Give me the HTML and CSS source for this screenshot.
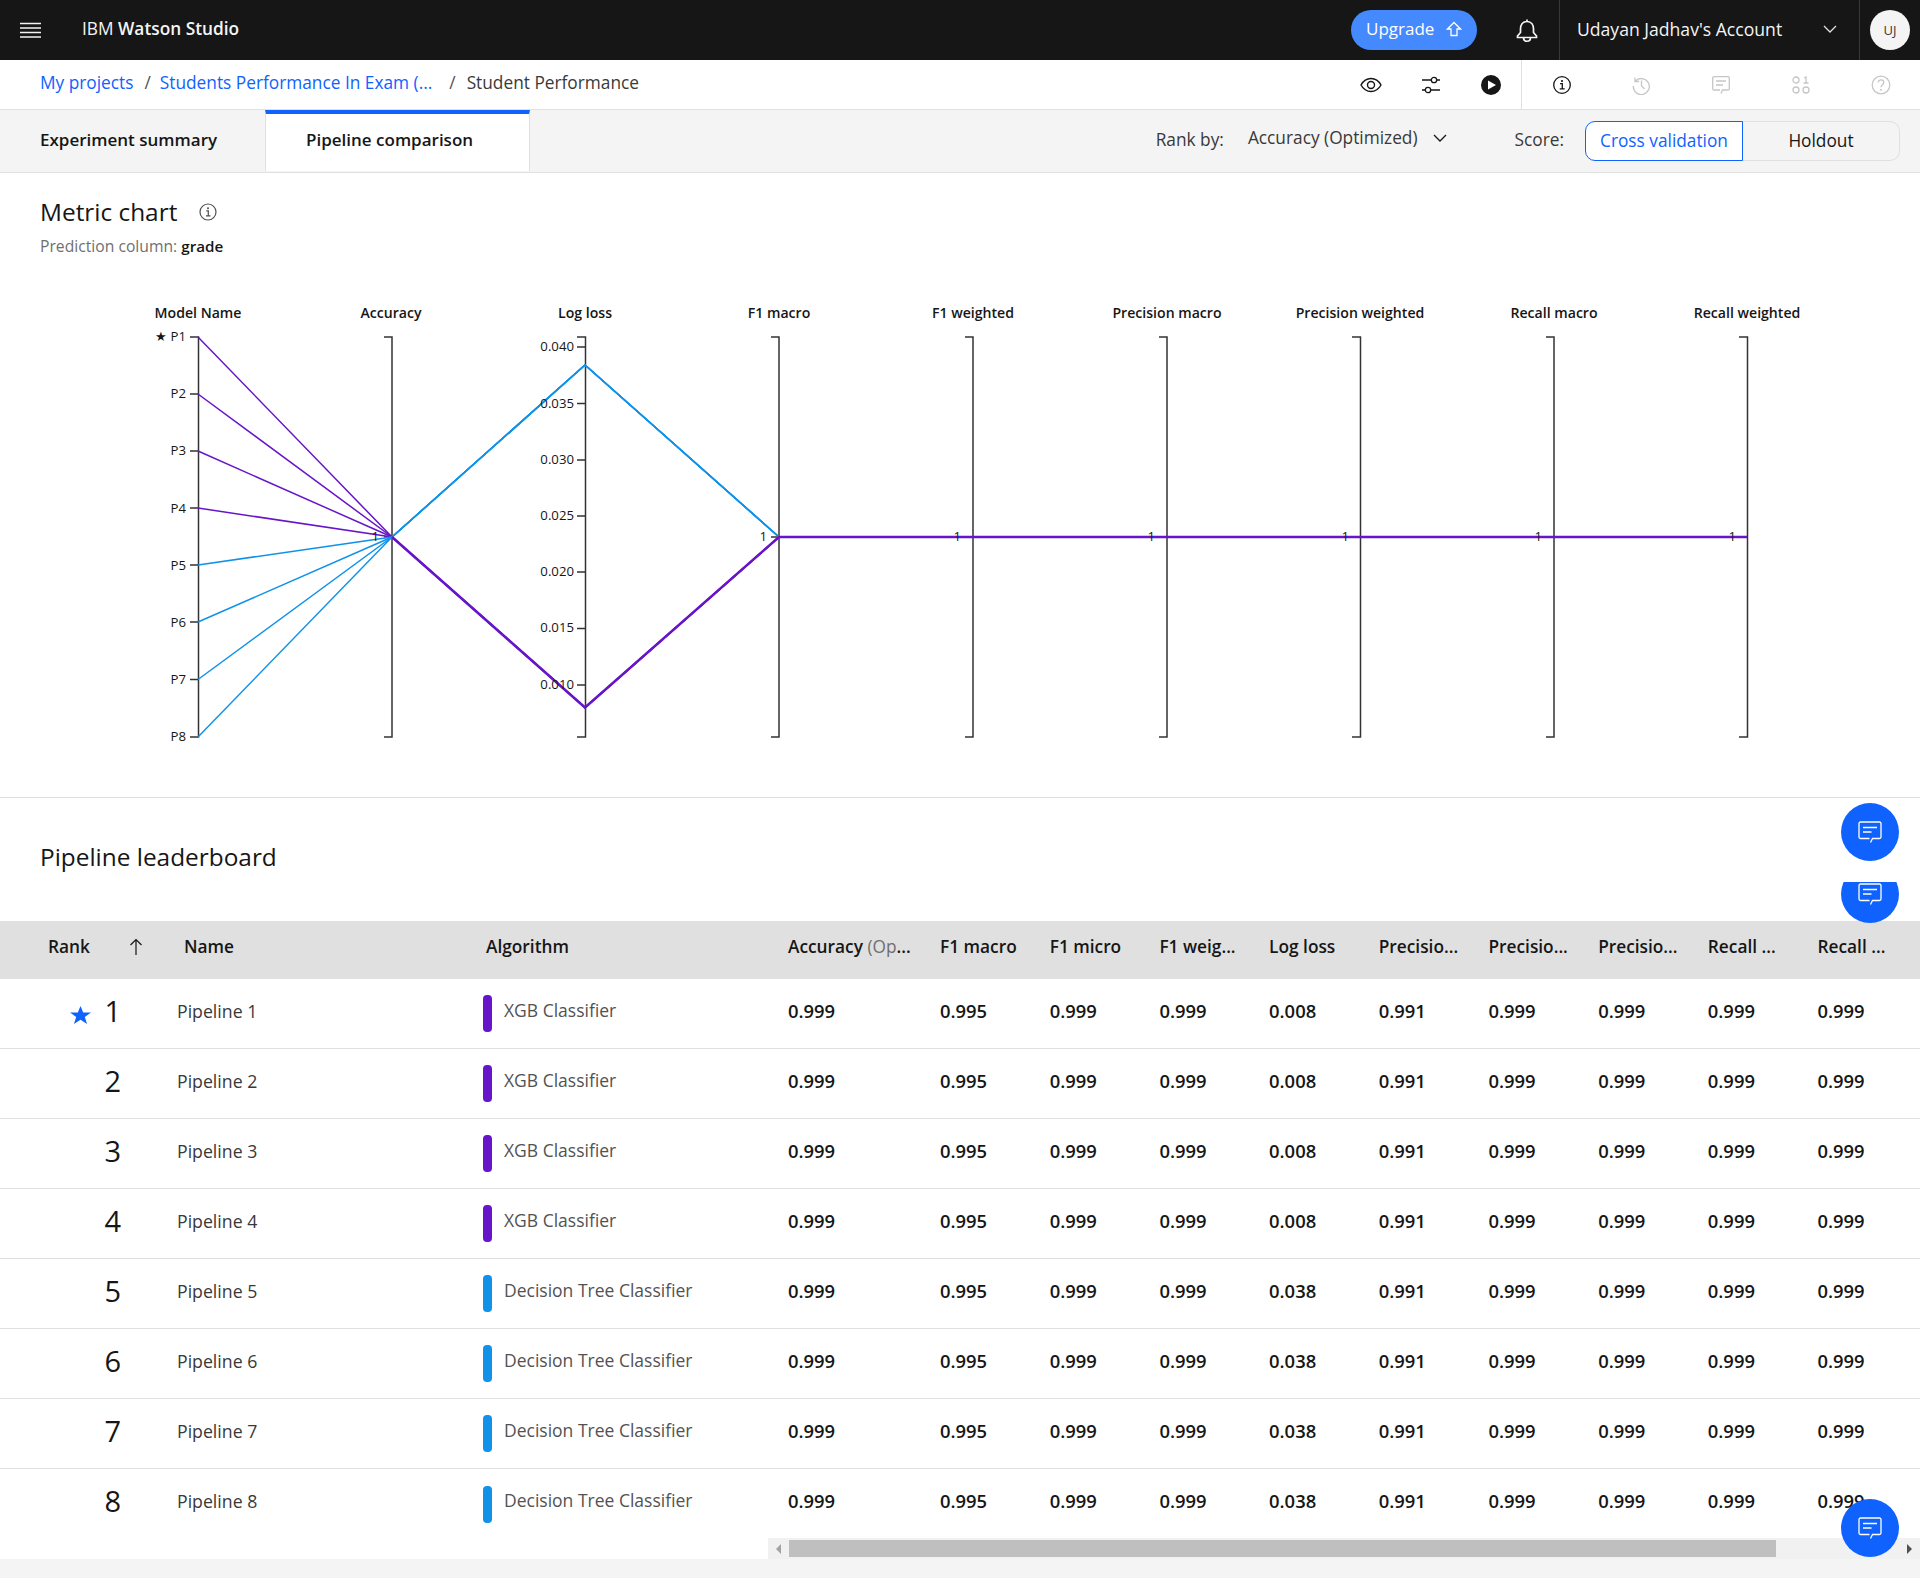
FILE: index.html
```html
<!DOCTYPE html>
<html lang="en">
<head>
  <meta charset="UTF-8" />
  <title>Student Performance - IBM Watson Studio</title>
  <link rel="stylesheet" href="styles.css">
</head>
<body>
  <div class="page">
    <header class="top-bar">
      <svg class="menu-icon" width="21" height="16" viewBox="0 0 21 16"><path d="M0 1.5h21M0 6h21M0 10.500h21M0 15h21" stroke="#f4f4f4" stroke-width="1.5" fill="none"/></svg>
      <div class="brand">IBM <b>Watson Studio</b></div>
      <button class="upgrade">Upgrade
        <svg width="16" height="16" viewBox="0 0 16 16"><path d="M8 1.500L14.500 8H11v6.500H5V8H1.500z" fill="none" stroke="#fff" stroke-width="1.300"/></svg>
      </button>
      <svg class="bell" width="24" height="26" viewBox="0 0 24 26"><path d="M12 2.500V4.500M12 4.500c-4.500 0-6.500 3.500-6.500 7.500v3.500L2.500 19v1.500h19V19l-3-3.500V12c0-4-2-7.500-6.500-7.500zM8.500 20.500c0 5 7 5 7 0" fill="none" stroke="#f4f4f4" stroke-width="1.700"/></svg>
      <div class="account">
        <span>Udayan Jadhav's Account</span>
        <svg width="14" height="8" viewBox="0 0 14 8"><path d="M1 1l6 6 6-6" fill="none" stroke="#e0e0e0" stroke-width="1.300"/></svg>
      </div>
      <div class="avatar">UJ</div>
    </header>

    <nav class="crumb-bar">
      <a class="crumb-link">My projects</a>
      <span class="crumb-sep">/</span>
      <a class="crumb-link">Students Performance In Exam (...</a>
      <span class="crumb-sep crumb-sep-wide">/</span>
      <span class="crumb-current">Student Performance</span>
      <div class="tools">
        <span class="tool">
          <svg width="22" height="16" viewBox="0 0 22 16"><path d="M1 8c2.500-4.500 6-6.500 10-6.500S18.500 3.500 21 8c-2.500 4.500-6 6.500-10 6.500S3.500 12.500 1 8z" fill="none" stroke="#161616" stroke-width="1.400"/><circle cx="11" cy="8" r="3.500" fill="none" stroke="#161616" stroke-width="1.400"/></svg>
        </span>
        <span class="tool">
          <svg width="20" height="18" viewBox="0 0 20 18"><g fill="none" stroke="#161616" stroke-width="1.300"><path d="M1 4h9M16 4h3M1 14h3M10 14h9"/><circle cx="13" cy="4" r="2.700"/><circle cx="7" cy="14" r="2.700"/></g></svg>
        </span>
        <span class="tool">
          <svg width="20" height="20" viewBox="0 0 20 20"><circle cx="10" cy="10" r="10" fill="#161616"/><path d="M7 5.500L15 10l-8 4.500z" fill="#fff"/></svg>
        </span>
        <span class="tool tool-wide tool-first">
          <svg width="20" height="20" viewBox="0 0 20 20"><circle cx="10" cy="10" r="8.300" fill="none" stroke="#161616" stroke-width="1.300"/><path d="M8 8.700h2.300v5M7.700 13.800h5" fill="none" stroke="#161616" stroke-width="1.300"/><circle cx="10" cy="6" r="1.100" fill="#161616"/></svg>
        </span>
        <span class="tool tool-wide">
          <svg width="20" height="20" viewBox="0 0 20 20"><g fill="none" stroke="#c6c6c6" stroke-width="1.300"><path d="M4 2.500v4h4M4.300 6.200A8 8 0 1 1 2.300 11"/><path d="M10.500 5.500V11l3 3"/></g></svg>
        </span>
        <span class="tool tool-wide">
          <svg width="18" height="20" viewBox="0 0 18 20"><g fill="none" stroke="#c6c6c6" stroke-width="1.300"><path d="M9 18.500l1.500-3.500H16a1.300 1.300 0 0 0 1.300-1.300V3A1.300 1.300 0 0 0 16 1.700H2A1.300 1.300 0 0 0 .700 3v10.700A1.300 1.300 0 0 0 2 15h6"/><path d="M4 6h10M4 10h7"/></g></svg>
        </span>
        <span class="tool tool-wide">
          <svg width="18" height="18" viewBox="0 0 18 18"><g fill="none" stroke="#c6c6c6" stroke-width="1.300"><circle cx="4" cy="4" r="3"/><circle cx="4" cy="14" r="3"/><circle cx="14" cy="14" r="3"/><path d="M12 2l2-1v6M11.500 7h5"/></g></svg>
        </span>
        <span class="tool tool-wide">
          <svg width="20" height="20" viewBox="0 0 20 20"><g fill="none" stroke="#c6c6c6" stroke-width="1.300"><circle cx="10" cy="10" r="8.800"/><path d="M7.300 7.500c0-3.500 5.500-3.500 5.500 0 0 2.300-2.800 2.300-2.800 4.700"/></g><circle cx="10" cy="14.800" r="1" fill="#c6c6c6"/></svg>
        </span>
      </div>
    </nav>

    <div class="tab-bar">
      <div class="tab">Experiment summary</div>
      <div class="tab tab-active">Pipeline comparison</div>
      <span class="rank-label">Rank by:</span>
      <span class="rank-select">Accuracy (Optimized)
        <svg width="14" height="8" viewBox="0 0 14 8"><path d="M1 1l6 6 6-6" fill="none" stroke="#161616" stroke-width="1.300"/></svg>
      </span>
      <span class="score-label">Score:</span>
      <div class="score-toggle">
        <span class="score-btn score-on">Cross validation</span>
        <span class="score-btn score-off">Holdout</span>
      </div>
    </div>

    <section class="metric">
      <h2 class="section-title">Metric chart
        <svg class="title-info" width="18" height="18" viewBox="0 0 18 18"><circle cx="9" cy="9" r="8" fill="none" stroke="#525252" stroke-width="1.200"/><path d="M7.300 7.800h2v5M7 12.900h4.500" fill="none" stroke="#525252" stroke-width="1.200"/><circle cx="9" cy="5.300" r="1" fill="#525252"/></svg>
      </h2>
      <p class="prediction">Prediction column: <b>grade</b></p>

      <svg class="chart" width="1920" height="507" viewBox="0 290 1920 507">
        <g class="heads">
          <text x="198" y="318">Model Name</text>
          <text x="391" y="318">Accuracy</text>
          <text x="585" y="318">Log loss</text>
          <text x="779" y="318">F1 macro</text>
          <text x="973" y="318">F1 weighted</text>
          <text x="1167" y="318">Precision macro</text>
          <text x="1360" y="318">Precision weighted</text>
          <text x="1554" y="318">Recall macro</text>
          <text x="1747" y="318">Recall weighted</text>
        </g>

        <g class="axes">
          <path d="M190 337H198.500V737H190"/>
          <path d="M384 337H392V737H384"/>
          <path d="M577 337H585.500V737H577"/>
          <path d="M771 337H779V737H771"/>
          <path d="M965 337H973V737H965"/>
          <path d="M1159 337H1167V737H1159"/>
          <path d="M1352 337H1360.500V737H1352"/>
          <path d="M1546 337H1554V737H1546"/>
          <path d="M1739 337H1747.500V737H1739"/>
          <path d="M190 394H198M190 451H198M190 508H198M190 565H198M190 622H198M190 679.500H198"/>
          <path d="M577 347H585M577 403.500H585M577 460H585M577 516H585M577 572H585M577 628.500H585M577 685H585"/>
          <path d="M384 537H392M771 537H779M965 537H973M1159 537H1167M1352 537H1360M1546 537H1554M1739 537H1747"/>
        </g>

        <g class="lines line-purple">
          <path d="M198 337L392 537L585 707.500L779 537H1747"/>
          <path d="M198 394L392 537L585 707.500L779 537"/>
          <path d="M198 451L392 537L585 707.500L779 537"/>
          <path d="M198 508L392 537L585 707.500L779 537"/>
        </g>
        <g class="lines line-blue">
          <path d="M198 565L392 537L585 365L779 537"/>
          <path d="M198 622L392 537L585 365L779 537"/>
          <path d="M198 679.500L392 537L585 365L779 537"/>
          <path d="M198 737L392 537L585 365L779 537"/>
        </g>
        <path class="lines line-purple line-flat" d="M392 537L585 707.500L779 537H1747"/>

        <g class="ticks">
          <text x="186" y="340.500">★ P1</text>
          <text x="186" y="397.500">P2</text>
          <text x="186" y="454.500">P3</text>
          <text x="186" y="512.500">P4</text>
          <text x="186" y="569.500">P5</text>
          <text x="186" y="626.500">P6</text>
          <text x="186" y="684">P7</text>
          <text x="186" y="740.500">P8</text>
          <text x="574" y="350.500">0.040</text>
          <text x="574" y="407.500">0.035</text>
          <text x="574" y="463.500">0.030</text>
          <text x="574" y="519.500">0.025</text>
          <text x="574" y="575.500">0.020</text>
          <text x="574" y="632">0.015</text>
          <text x="574" y="688.500">0.010</text>
          <text x="379" y="541">1</text>
          <text x="767" y="541">1</text>
          <text x="961" y="541">1</text>
          <text x="1155" y="541">1</text>
          <text x="1349" y="541">1</text>
          <text x="1542" y="541">1</text>
          <text x="1736" y="541">1</text>
        </g>
      </svg>
    </section>

    <section class="leaderboard">
      <h2 class="section-title board-title">Pipeline leaderboard</h2>
      <div class="table-wrap">
        <table class="board">
          <colgroup>
            <col class="col-rank"><col class="col-name"><col class="col-algo"><col class="col-acc">
            <col class="col-num"><col class="col-num"><col class="col-num"><col class="col-num"><col class="col-num"><col class="col-num"><col class="col-num"><col class="col-num"><col class="col-num">
          </colgroup>
          <thead>
            <tr>
              <th class="head-rank">Rank
                <svg width="14" height="18" viewBox="0 0 14 18"><path d="M7 17V1.500M1.500 7L7 1.500 12.500 7" fill="none" stroke="#161616" stroke-width="1.200"/></svg>
              </th>
              <th class="head-name">Name</th>
              <th class="head-algo">Algorithm</th>
              <th>Accuracy <span class="head-dim">(Op</span>...</th>
              <th>F1 macro</th>
              <th>F1 micro</th>
              <th>F1 weig...</th>
              <th>Log loss</th>
              <th>Precisio...</th>
              <th>Precisio...</th>
              <th>Precisio...</th>
              <th>Recall ...</th>
              <th>Recall ...</th>
            </tr>
          </thead>
          <tbody>
            <tr>
              <td class="cell-rank"><svg class="star" width="21" height="18" viewBox="0 0 22 20" preserveAspectRatio="none"><path d="M11 0l2.800 7.300H22l-6.500 4.900 2.400 7.800L11 15.300 4.100 20l2.400-7.800L0 7.300h8.200z" fill="#0f62fe"/></svg>1</td>
              <td class="cell-name">Pipeline 1</td>
              <td class="cell-algo"><div class="algo"><i class="algo-bar bar-purple"></i><span>XGB Classifier</span></div></td>
              <td>0.999</td><td>0.995</td><td>0.999</td><td>0.999</td><td>0.008</td><td>0.991</td><td>0.999</td><td>0.999</td><td>0.999</td><td>0.999</td>
            </tr>
            <tr>
              <td class="cell-rank">2</td>
              <td class="cell-name">Pipeline 2</td>
              <td class="cell-algo"><div class="algo"><i class="algo-bar bar-purple"></i><span>XGB Classifier</span></div></td>
              <td>0.999</td><td>0.995</td><td>0.999</td><td>0.999</td><td>0.008</td><td>0.991</td><td>0.999</td><td>0.999</td><td>0.999</td><td>0.999</td>
            </tr>
            <tr>
              <td class="cell-rank">3</td>
              <td class="cell-name">Pipeline 3</td>
              <td class="cell-algo"><div class="algo"><i class="algo-bar bar-purple"></i><span>XGB Classifier</span></div></td>
              <td>0.999</td><td>0.995</td><td>0.999</td><td>0.999</td><td>0.008</td><td>0.991</td><td>0.999</td><td>0.999</td><td>0.999</td><td>0.999</td>
            </tr>
            <tr>
              <td class="cell-rank">4</td>
              <td class="cell-name">Pipeline 4</td>
              <td class="cell-algo"><div class="algo"><i class="algo-bar bar-purple"></i><span>XGB Classifier</span></div></td>
              <td>0.999</td><td>0.995</td><td>0.999</td><td>0.999</td><td>0.008</td><td>0.991</td><td>0.999</td><td>0.999</td><td>0.999</td><td>0.999</td>
            </tr>
            <tr>
              <td class="cell-rank">5</td>
              <td class="cell-name">Pipeline 5</td>
              <td class="cell-algo"><div class="algo"><i class="algo-bar bar-blue"></i><span>Decision Tree Classifier</span></div></td>
              <td>0.999</td><td>0.995</td><td>0.999</td><td>0.999</td><td>0.038</td><td>0.991</td><td>0.999</td><td>0.999</td><td>0.999</td><td>0.999</td>
            </tr>
            <tr>
              <td class="cell-rank">6</td>
              <td class="cell-name">Pipeline 6</td>
              <td class="cell-algo"><div class="algo"><i class="algo-bar bar-blue"></i><span>Decision Tree Classifier</span></div></td>
              <td>0.999</td><td>0.995</td><td>0.999</td><td>0.999</td><td>0.038</td><td>0.991</td><td>0.999</td><td>0.999</td><td>0.999</td><td>0.999</td>
            </tr>
            <tr>
              <td class="cell-rank">7</td>
              <td class="cell-name">Pipeline 7</td>
              <td class="cell-algo"><div class="algo"><i class="algo-bar bar-blue"></i><span>Decision Tree Classifier</span></div></td>
              <td>0.999</td><td>0.995</td><td>0.999</td><td>0.999</td><td>0.038</td><td>0.991</td><td>0.999</td><td>0.999</td><td>0.999</td><td>0.999</td>
            </tr>
            <tr>
              <td class="cell-rank">8</td>
              <td class="cell-name">Pipeline 8</td>
              <td class="cell-algo"><div class="algo"><i class="algo-bar bar-blue"></i><span>Decision Tree Classifier</span></div></td>
              <td>0.999</td><td>0.995</td><td>0.999</td><td>0.999</td><td>0.038</td><td>0.991</td><td>0.999</td><td>0.999</td><td>0.999</td><td>0.999</td>
            </tr>
          </tbody>
        </table>
      </div>
      <div class="hscroll">
        <span class="scroll-arrow arrow-left"></span>
        <span class="scroll-thumb"></span>
        <span class="scroll-arrow arrow-right"></span>
      </div>
    </section>
    <div class="page-foot"></div>

    <button class="fab fab-one">
      <svg width="24" height="22" viewBox="0 0 24 22"><g fill="none" stroke="#fff" stroke-width="1.300"><path d="M12.500 21.500l2-4H21.500a1.500 1.500 0 0 0 1.500-1.500V2.500A1.500 1.500 0 0 0 21.500 1H2.500A1.500 1.500 0 0 0 1 2.500V16a1.500 1.500 0 0 0 1.500 1.500h9"/><path d="M5 6.500h14M5 11h8.500"/></g></svg>
    </button>
    <div class="fab-clip">
      <button class="fab">
        <svg width="24" height="22" viewBox="0 0 24 22"><g fill="none" stroke="#fff" stroke-width="1.300"><path d="M12.500 21.500l2-4H21.500a1.500 1.500 0 0 0 1.500-1.500V2.500A1.500 1.500 0 0 0 21.500 1H2.500A1.500 1.500 0 0 0 1 2.500V16a1.500 1.500 0 0 0 1.500 1.500h9"/><path d="M5 6.500h14M5 11h8.500"/></g></svg>
      </button>
    </div>
    <button class="fab fab-three">
      <svg width="24" height="22" viewBox="0 0 24 22"><g fill="none" stroke="#fff" stroke-width="1.300"><path d="M12.500 21.500l2-4H21.500a1.500 1.500 0 0 0 1.500-1.500V2.500A1.500 1.500 0 0 0 21.500 1H2.500A1.500 1.500 0 0 0 1 2.500V16a1.500 1.500 0 0 0 1.500 1.500h9"/><path d="M5 6.500h14M5 11h8.500"/></g></svg>
    </button>
  </div>
</body>
</html>
```

FILE: styles.css
```css
* {
  box-sizing: border-box;
}

body {
  margin: 0;
  font-family: "Open Sans", "Noto Sans", Arial, sans-serif;
  font-size: 16px;
  color: #161616;
  background: #ffffff;
}

.page {
  position: relative;
  width: 1920px;
  height: 1578px;
  overflow: hidden;
}

/* top bar */
.top-bar {
  display: flex;
  align-items: center;
  height: 60px;
  padding-left: 20px;
  background: #161616;
  color: #f4f4f4;
}

.brand {
  margin-left: 41px;
  padding-bottom: 3px;
  font-size: 17.300px;
}

.brand b {
  font-weight: 600;
}

.upgrade {
  display: flex;
  align-items: center;
  justify-content: space-between;
  width: 126px;
  height: 40px;
  margin-left: auto;
  padding: 0 15px 3px 15px;
  border: none;
  border-radius: 20px;
  background: #4589ff;
  color: #ffffff;
  font: inherit;
  font-size: 17px;
}

.bell {
  margin: 0 20px 0 38px;
}

.account {
  display: flex;
  align-items: center;
  justify-content: space-between;
  width: 301px;
  height: 60px;
  padding: 0 22px 2px 17px;
  border-left: 1px solid #393939;
  border-right: 1px solid #393939;
  font-size: 17.600px;
}

.avatar {
  display: flex;
  align-items: center;
  justify-content: center;
  width: 40px;
  height: 40px;
  margin: 0 10px;
  border-radius: 50%;
  background: #f4f4f4;
  color: #393939;
  font-size: 13px;
}

/* breadcrumb */
.crumb-bar {
  display: flex;
  align-items: center;
  height: 50px;
  padding-left: 40px;
  border-bottom: 1px solid #e0e0e0;
  font-size: 17.300px;
}

.crumb-link,
.crumb-sep,
.crumb-current {
  margin-bottom: 4px;
}

.crumb-link {
  color: #0f62fe;
}

.crumb-sep {
  margin-left: 11px;
  margin-right: 9px;
  color: #525252;
}

.crumb-sep-wide {
  margin-left: 17px;
  margin-right: 11px;
}

.crumb-current {
  color: #393939;
}

.tools {
  display: flex;
  align-items: center;
  height: 100%;
  margin-left: auto;
  margin-right: -1px;
}

.tool {
  display: flex;
  align-items: center;
  justify-content: center;
  width: 60px;
  height: 100%;
}

.tool-wide {
  width: 80px;
}

.tool-first {
  border-left: 1px solid #e0e0e0;
}

/* tabs */
.tab-bar {
  display: flex;
  align-items: center;
  height: 63px;
  padding-right: 20px;
  border-bottom: 1px solid #e0e0e0;
  background: #f4f4f4;
}

.tab {
  display: flex;
  align-items: center;
  align-self: flex-start;
  width: 265px;
  height: 61px;
  padding: 0 0 3px 40px;
  font-weight: 600;
  font-size: 17px;
}

.tab-active {
  padding-bottom: 7px;
  border-top: 4px solid #0f62fe;
  border-left: 1px solid #e0e0e0;
  border-right: 1px solid #e0e0e0;
  background: #ffffff;
}

.rank-label {
  margin-left: auto;
  margin-bottom: 4px;
  color: #393939;
  font-size: 17.300px;
}

.rank-select {
  display: flex;
  align-items: center;
  gap: 15px;
  margin: 0 68px 7px 24px;
  color: #393939;
  font-size: 17.300px;
}

.score-label {
  margin-right: 21px;
  margin-bottom: 4px;
  color: #393939;
  font-size: 17.300px;
}

.score-toggle {
  display: flex;
  height: 40px;
  font-size: 17.300px;
}

.score-btn {
  display: flex;
  align-items: center;
  justify-content: center;
  height: 100%;
  padding-bottom: 2px;
}

.score-on {
  width: 158px;
  border: 1px solid #0f62fe;
  border-radius: 10px 0 0 10px;
  background: #ffffff;
  color: #0f62fe;
}

.score-off {
  width: 157px;
  border: 1px solid #e0e0e0;
  border-left: none;
  border-radius: 0 10px 10px 0;
  color: #161616;
}

/* metric chart */
.metric {
  height: 625px;
  padding-top: 23px;
  border-bottom: 1px solid #e0e0e0;
}

.section-title {
  display: flex;
  align-items: center;
  margin: 0;
  padding-left: 40px;
  font-size: 24.400px;
  line-height: 32px;
  font-weight: 400;
}

.title-info {
  margin-left: 22px;
}

.prediction {
  height: 20px;
  margin: 8px 0 34px;
  padding-left: 40px;
  color: #6f6f6f;
  font-size: 15.700px;
  line-height: 20px;
}

.prediction b {
  color: #161616;
  font-size: 15.200px;
  font-weight: 600;
}

.chart {
  display: block;
}

.heads text {
  text-anchor: middle;
  font-size: 14.100px;
  font-weight: 600;
  fill: #161616;
}

.axes path {
  fill: none;
  stroke: #333333;
  stroke-width: 1.500;
}

.lines path,
.line-flat {
  fill: none;
  stroke-width: 1.500;
}

.line-purple path,
.line-purple {
  stroke: #6616c8;
}

.line-blue path {
  stroke: #1192e8;
}

.line-flat {
  stroke-width: 2.500;
}

.ticks text {
  text-anchor: end;
  font-size: 13.200px;
  fill: #161616;
}

/* leaderboard */
.leaderboard {
  height: 761px;
}

.board-title {
  height: 123px;
  padding-bottom: 5px;
}

.table-wrap {
  height: 617px;
  overflow: hidden;
}

.board {
  width: 1927px;
  border-collapse: separate;
  border-spacing: 0;
  table-layout: fixed;
}

.col-rank {
  width: 177px;
}

.col-name {
  width: 306px;
}

.col-algo {
  width: 305px;
}

.col-acc {
  width: 152px;
}

.col-num {
  width: 109.700px;
}

.board th {
  height: 58px;
  padding: 0 0 8px;
  background: #e0e0e0;
  text-align: left;
  font-size: 17.300px;
  font-weight: 600;
  white-space: nowrap;
}

.board th svg {
  margin-left: 35px;
  vertical-align: -3px;
}

.head-dim {
  color: #6f6f6f;
  font-weight: 400;
}

.board .head-rank {
  padding-left: 48px;
}

.board .head-name {
  padding-left: 7px;
}

.board .head-algo {
  padding-left: 3px;
}

.board td {
  height: 70px;
  padding: 0 0 7px;
  border-bottom: 1px solid #e0e0e0;
  font-size: 18.400px;
  font-weight: 600;
}

.board tbody tr:last-child td {
  border-bottom: none;
}

.board .cell-rank {
  padding-right: 56px;
  text-align: right;
  font-size: 29px;
  font-weight: 400;
}

.star {
  margin-right: 13px;
  vertical-align: -2px;
}

.board .cell-name {
  padding-bottom: 6px;
  color: #393939;
  font-size: 17.700px;
  font-weight: 400;
}

.board .cell-algo {
  padding-bottom: 0;
}

.algo {
  display: flex;
  align-items: center;
  gap: 12px;
  color: #525252;
  font-size: 17.500px;
  font-weight: 400;
}

.algo span {
  margin-bottom: 8px;
}

.algo-bar {
  width: 9px;
  height: 37px;
  border-radius: 4px;
}

.bar-purple {
  background: #6616c8;
}

.bar-blue {
  background: #1192e8;
}

.hscroll {
  display: flex;
  align-items: center;
  height: 21px;
  margin-left: 768px;
  background: #f1f1f1;
}

.scroll-arrow {
  display: flex;
  align-items: center;
  justify-content: center;
  width: 21px;
  height: 100%;
}

.arrow-left::before {
  content: "";
  border-style: solid;
  border-width: 5px 5px 5px 0;
  border-color: transparent #a3a3a3 transparent transparent;
}

.arrow-right {
  margin-left: auto;
}

.arrow-right::before {
  content: "";
  border-style: solid;
  border-width: 5px 0 5px 5px;
  border-color: transparent transparent transparent #505050;
}

.scroll-thumb {
  width: 987px;
  height: 17px;
  background: #bfbfbf;
}

.page-foot {
  height: 19px;
  background: #f4f4f4;
}

/* floating chat buttons */
.fab {
  display: flex;
  align-items: center;
  justify-content: center;
  width: 58px;
  height: 58px;
  padding: 0;
  border: none;
  border-radius: 50%;
  background: #0f62fe;
}

.fab-one {
  position: absolute;
  top: 803px;
  right: 21px;
}

.fab-clip {
  position: absolute;
  top: 882px;
  right: 21px;
  width: 58px;
  height: 42px;
  overflow: hidden;
}

.fab-clip .fab {
  margin-top: -17px;
}

.fab-three {
  position: absolute;
  top: 1499px;
  right: 21px;
}
```
